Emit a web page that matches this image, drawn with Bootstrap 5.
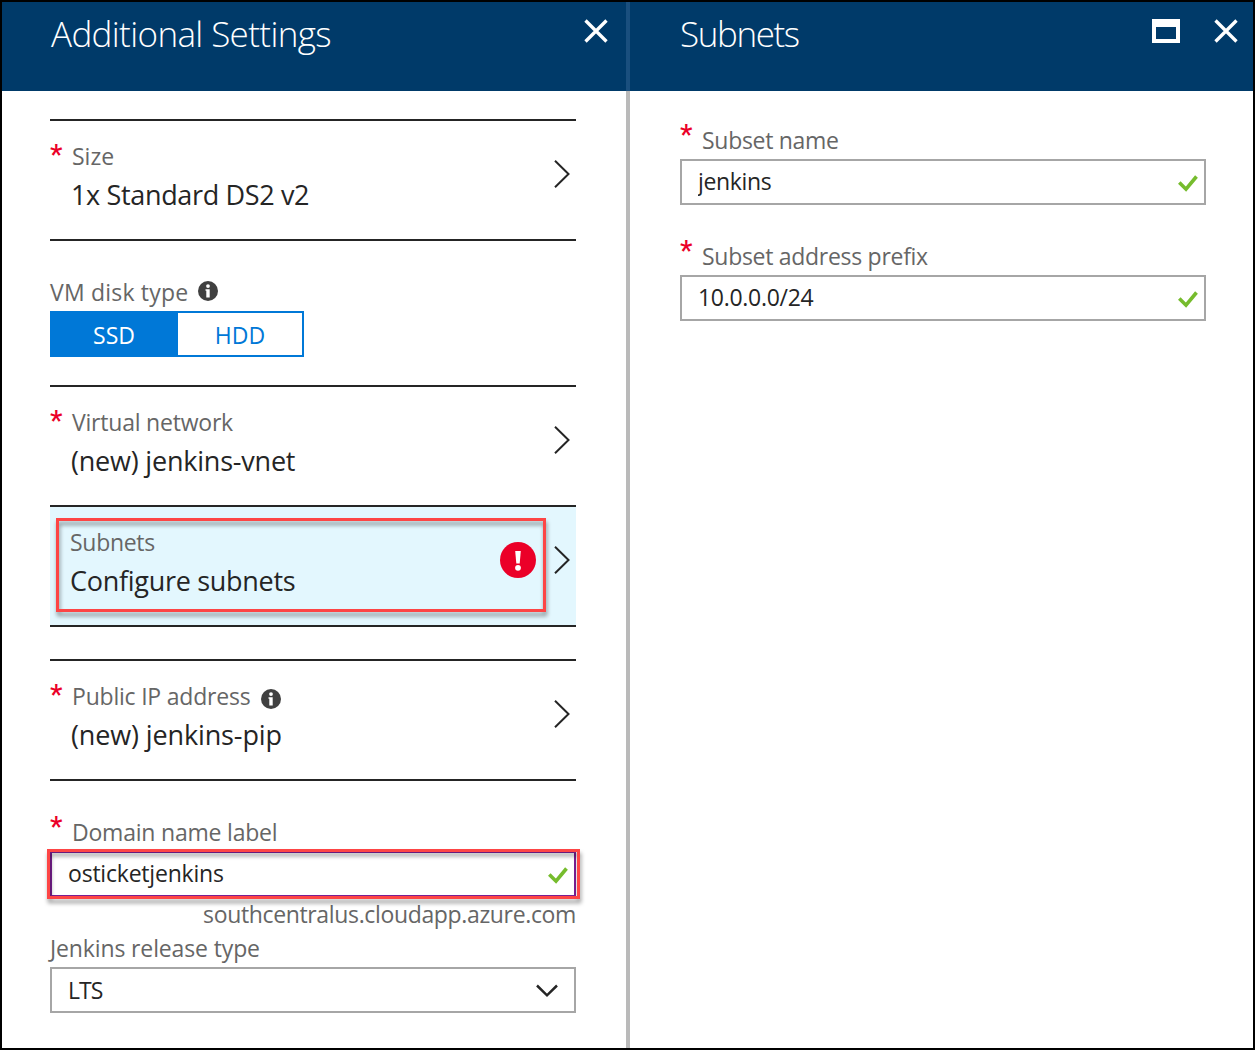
<!DOCTYPE html>
<html lang="en">
<head>
<meta charset="utf-8">
<title>Additional Settings</title>
<meta name="viewport" content="width=device-width, initial-scale=1">
<link href="https://cdn.jsdelivr.net/npm/bootstrap@5.3.0/dist/css/bootstrap.min.css" rel="stylesheet">
<style>
  body { font-family: "Open Sans", "Noto Sans", sans-serif; color: #252525; font-size: 23px; line-height: 32px; background: #fff; }
  svg { display: block; flex: none; }
  .portal { height: 1050px; border: 2px solid #000; }
  .blade { width: 624px; }
  .blade-right { width: 623px; }
  .blade-split { width: 4px; background: linear-gradient(#1a4f7e 89px, #bababa 89px); }
  .blade-head { height: 89px; background: #003a69; color: #fff; padding: 8px 18px 0 49px; }
  .blade-right .blade-head { padding: 8px 15px 0 50px; }
  .blade-title { font-size: 35px; font-weight: 300; line-height: 48px; margin: 0; letter-spacing: -.62px; }
  .blade-right .blade-title { letter-spacing: -1.4px; }
  .blade-head svg { margin-top: 9px; }
  .blade-head .close-gap { margin-left: 34px; }
  .blade-body { padding: 28px 50px 0 48px; }
  .blade-right .blade-body { padding: 33px 47px 0 50px; }
  .picker { height: 120px; border-top: 2px solid #252525; padding: 19px 4px 0 0; background: #fff; }
  .picker-end { height: 122px; border-bottom: 2px solid #252525; }
  .picker-gap { margin-top: 32px; }
  .picker-on { background: #e3f7fe; }
  .picker .chev { margin-top: 20px; }
  .picker-value { font-size: 27px; line-height: 38px; margin: 4px 0 0 21px; }
  .picker-on .picker-value, .picker-on .cap { margin-left: 20px; }
  .alert-mark { margin: 16px 18px 0 0; }
  .info-low { margin: 9px 0 0 11px; }
  .info-top { margin: 5px 0 0 10px; }
  .cap { color: #666; white-space: nowrap; }
  .req { display: inline-block; width: 22px; color: #eb0028; font: 500 28px/0 Roboto, sans-serif; vertical-align: 1px; }
  .field-cap { height: 32px; margin: 35px 0 3px; }
  .field-cap .req { vertical-align: 5px; }
  .first-cap { margin-top: 0; }
  .host-cap { margin-top: 1px; }
  .plain-cap { margin: 2px 0 3px; }
  .box { height: 46px; border: 2px solid #a6a6a6; border-radius: 0; padding: 0 6px 2px 16px; color: #252525; background: #fff; }
  .box input { font-size: 23px; line-height: 32px; color: #252525; padding: 0; border: 0; outline: 0; background: none; }
  .box-focus { border-color: #7a1f93; }
  .box svg { margin-top: 4px; }
  .box-select { padding: 0 16px 0 16px; }
  .box-select svg { margin-top: 2px; }
  .toggle { width: 254px; height: 46px; margin-bottom: 28px; }
  .toggle .btn { border: 2px solid #0078d7; border-left-width: 0; border-radius: 0; font-size: 23px; line-height: 32px; padding: 2px 0 0; color: #0078d7; background: #fff; flex: none; width: 126px; }
  .toggle .btn.active { background: #0078d7; color: #fff; border-color: #0078d7; border-left-width: 2px; width: 128px; }
  .callout { position: absolute; border: 3px solid #fd4545; filter: drop-shadow(1px 4px 2px rgba(0,0,0,.42)); pointer-events: none; }
  .callout-a { left: 6px; top: 11px; width: 490px; height: 94px; }
  .callout-b { left: -3px; top: -2px; width: 533px; height: 50px; }
  /* tracking per string */
  .s-ds2, .s-jen, .s-host { letter-spacing: -.35px; }
  .s-disk { letter-spacing: .2px; }
  .s-vnet, .s-jvnet, .s-pip, .s-dom, .s-ost { letter-spacing: -.21px; }
  .s-jpip, .s-rel { letter-spacing: -.13px; }
  .s-sub, .s-sn, .s-sp, .s-ip, .s-conf { letter-spacing: -.29px; }
  .s-lts { letter-spacing: -.9px; }
</style>
</head>
<body>
<svg width="0" height="0" class="position-absolute">
  <symbol id="close" viewBox="0 0 24 24"><path d="M1.5 1.500 22.500 22.500M22.500 1.500 1.500 22.500" stroke="#fff" stroke-width="3.300" fill="none"/></symbol>
  <symbol id="next" viewBox="0 0 18 28"><path d="M1 .8 14.500 14 1 27.200" stroke="#252525" stroke-width="2" fill="none"/></symbol>
  <symbol id="ok" viewBox="0 0 20 17"><path d="M1.300 7.500 8 14.200 18.500 1.500" stroke="#76bc2d" stroke-width="3.600" fill="none"/></symbol>
  <symbol id="info" viewBox="0 0 20 20"><circle cx="10" cy="10" r="10" fill="#404040"/><circle cx="10" cy="5.100" r="1.900" fill="#fff"/><path d="M7.500 8.300h4.200v8.200H8.300V9.800h-.8z" fill="#fff"/></symbol>
</svg>
<div class="portal d-flex overflow-hidden">
  <section class="blade flex-shrink-0">
    <header class="blade-head d-flex justify-content-between align-items-start">
      <h1 class="blade-title">Additional Settings</h1>
      <svg width="24" height="24"><use href="#close"/></svg>
    </header>
    <div class="blade-body">
      <div class="picker picker-end d-flex justify-content-between">
        <div>
          <div class="cap"><span class="req">*</span><span class="s-size">Size</span></div>
          <div class="picker-value"><span class="s-ds2">1x Standard DS2 v2</span></div>
        </div>
        <svg class="chev" width="18" height="28"><use href="#next"/></svg>
      </div>
      <div class="cap field-cap d-flex"><span class="s-disk">VM disk type</span>
        <svg class="info-top" width="20" height="20"><use href="#info"/></svg></div>
      <div class="toggle d-flex" role="group">
        <button type="button" class="btn active">SSD</button>
        <button type="button" class="btn">HDD</button>
      </div>
      <div class="picker d-flex justify-content-between">
        <div>
          <div class="cap"><span class="req">*</span><span class="s-vnet">Virtual network</span></div>
          <div class="picker-value"><span class="s-jvnet">(new) jenkins-vnet</span></div>
        </div>
        <svg class="chev" width="18" height="28"><use href="#next"/></svg>
      </div>
      <div class="picker picker-end picker-on d-flex position-relative">
        <div class="flex-grow-1">
          <div class="cap"><span class="s-sub">Subnets</span></div>
          <div class="picker-value"><span class="s-conf">Configure subnets</span></div>
        </div>
        <svg width="36" height="36" class="alert-mark" viewBox="0 0 36 36"><circle cx="18" cy="18" r="18" fill="#eb0028"/><path d="M15.200 9h5.600l-1.100 12.500h-3.400z" fill="#fff"/><circle cx="18" cy="25.800" r="2.900" fill="#fff"/></svg>
        <svg class="chev" width="18" height="28"><use href="#next"/></svg>
        <div class="callout callout-a"></div>
      </div>
      <div class="picker picker-end picker-gap d-flex justify-content-between">
        <div>
          <div class="cap d-flex"><span><span class="req">*</span><span class="s-pip">Public IP address</span></span>
            <svg class="info-low" width="20" height="20"><use href="#info"/></svg></div>
          <div class="picker-value"><span class="s-jpip">(new) jenkins-pip</span></div>
        </div>
        <svg class="chev" width="18" height="28"><use href="#next"/></svg>
      </div>
      <div class="cap field-cap"><span class="req">*</span><span class="s-dom">Domain name label</span></div>
      <div class="position-relative">
        <div class="box box-focus d-flex align-items-center">
          <input class="flex-grow-1 s-ost" type="text" value="osticketjenkins" aria-label="Domain name label">
          <svg width="20" height="17"><use href="#ok"/></svg>
        </div>
        <div class="callout callout-b"></div>
      </div>
      <div class="cap host-cap text-end"><span class="s-host">southcentralus.cloudapp.azure.com</span></div>
      <div class="cap plain-cap"><span class="s-rel">Jenkins release type</span></div>
      <div class="box box-select d-flex align-items-center justify-content-between"><span class="s-lts">LTS</span>
        <svg width="22" height="14" viewBox="0 0 22 14"><path d="M1 1.500 11 11.300 21 1.500" stroke="#252525" stroke-width="2.500" fill="none"/></svg>
      </div>
    </div>
  </section>
  <div class="blade-split flex-shrink-0"></div>
  <section class="blade-right flex-shrink-0">
    <header class="blade-head d-flex align-items-start">
      <h2 class="blade-title me-auto">Subnets</h2>
      <svg width="28" height="24" viewBox="0 0 28 24"><path d="M0 0h28v24H0zM4 8v12h20V8z" fill="#fff" fill-rule="evenodd"/></svg>
      <svg width="24" height="24" class="close-gap"><use href="#close"/></svg>
    </header>
    <div class="blade-body">
      <div class="cap field-cap first-cap"><span class="req">*</span><span class="s-sn">Subset name</span></div>
      <div class="box d-flex align-items-center">
        <input class="flex-grow-1 s-jen" type="text" value="jenkins" aria-label="Subset name">
        <svg width="20" height="17"><use href="#ok"/></svg>
      </div>
      <div class="cap field-cap"><span class="req">*</span><span class="s-sp">Subset address prefix</span></div>
      <div class="box d-flex align-items-center">
        <input class="flex-grow-1 s-ip" type="text" value="10.0.0.0/24" aria-label="Subset address prefix">
        <svg width="20" height="17"><use href="#ok"/></svg>
      </div>
    </div>
  </section>
</div>
<script src="https://cdn.jsdelivr.net/npm/bootstrap@5.3.0/dist/js/bootstrap.bundle.min.js"></script>
</body>
</html>
